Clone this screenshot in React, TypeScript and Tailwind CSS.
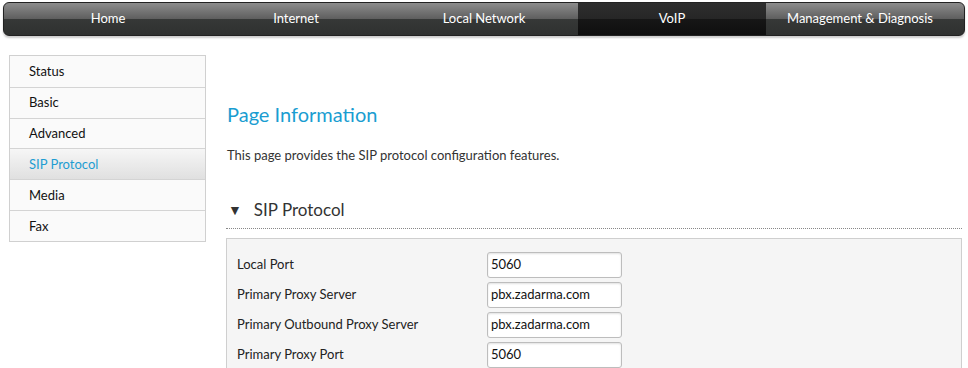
const tabs = ["Home", "Internet", "Local Network", "VoIP", "Management & Diagnosis"];
const menu = ["Status", "Basic", "Advanced", "SIP Protocol", "Media", "Fax"];
const fields = [
  { label: "Local Port", value: "5060" },
  { label: "Primary Proxy Server", value: "pbx.zadarma.com" },
  { label: "Primary Outbound Proxy Server", value: "pbx.zadarma.com" },
  { label: "Primary Proxy Port", value: "5060" },
];

function App() {
  return (
    <div className="w-[968px] h-[368px] overflow-hidden bg-white font-['Lato','Open_Sans',sans-serif] text-[#222]">
      <div className="pt-[2px] px-[3px]">
        <div className="h-[34px] rounded-[6px] border border-[#222] bg-[linear-gradient(#8c8c8c,#5e5e5e_50%,#363837_50%,#2f3130)] px-[10px] flex shadow-[0_2px_2px_rgba(0,0,0,0.2)]">
          {tabs.map((t) => (
            <div
              key={t}
              className={
                "w-[188px] flex items-center justify-center text-[13px] text-white " +
                (t === "VoIP" ? "bg-[linear-gradient(#2e2e2e,#262626_50%,#161616_50%,#0e0e0e)]" : "")
              }
            >
              {t}
            </div>
          ))}
        </div>
      </div>

      <div className="flex mt-[19px]">
        <div className="ml-[9px] w-[197px] h-[187px] border border-[#d0d0d0] bg-[#fafafa] flex flex-col">
          {menu.map((m, i) => (
            <div
              key={m}
              className={
                "h-[31px] flex items-center pl-[19px] text-[13px] pt-[1px] " +
                (i > 0 ? "border-t border-[#d4d4d4] " : "") +
                (m === "SIP Protocol"
                  ? "bg-[linear-gradient(#f6f6f6,#e0e0e0)] text-[#1e9dd2]"
                  : "text-[#111]")
              }
            >
              {m}
            </div>
          ))}
        </div>

        <div className="ml-[20px] w-[736px]">
          <h1 className="mt-[45px] ml-[1px] text-[20px] leading-[28px] text-[#1a9dd1]">Page Information</h1>
          <p className="mt-[17px] ml-[1px] text-[13px] leading-[20px] text-[#333]">
            This page provides the SIP protocol configuration features.
          </p>
          <div className="mt-[33px] ml-[2px] flex items-center gap-[12px] text-[17px] text-[#333] leading-[24px]">
            <span className="text-[14px] text-[#333]">▼</span>
            <span>SIP Protocol</span>
          </div>
          <div className="mt-[6px] border-b border-dotted border-[#888]"></div>
          <div className="mt-[9px] border border-[#cfcfcf] bg-[#f5f5f5] pt-[11px] pl-[10px] h-[140px]">
            {fields.map((f) => (
              <div key={f.label} className="flex items-center h-[30px]">
                <span className="w-[250px] text-[13px] text-[#222]">{f.label}</span>
                <div className="w-[135px] h-[26px] rounded-[3px] border border-[#bdbdbd] bg-white shadow-[inset_0_1px_2px_rgba(0,0,0,0.12)] flex items-center px-[3px] text-[13px] text-[#111]">
                  {f.value}
                </div>
              </div>
            ))}
          </div>
        </div>
      </div>
    </div>
  );
}

export default App;
